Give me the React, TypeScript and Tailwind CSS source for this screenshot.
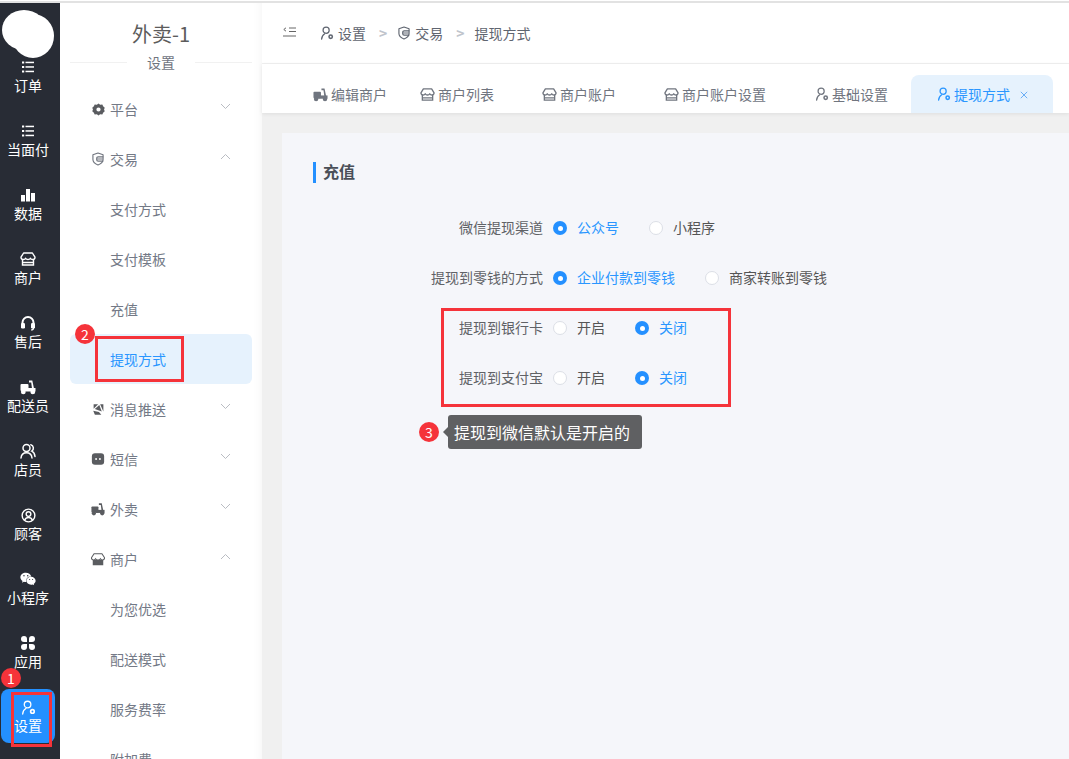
import { ReactNode } from 'react';
import { FaWeixin } from 'react-icons/fa';

type IconProps = { className?: string };

function UserGearIcon({ className }: IconProps) {
  return (
    <svg viewBox="0 0 16 16" className={className} fill="none" stroke="currentColor" strokeWidth="1.4">
      <circle cx="7" cy="4.800" r="3.500" />
      <path d="M1.800 15c.2-3 1.600-5 3.600-6.200" strokeLinecap="round" />
      <circle cx="12.200" cy="12.200" r="1.900" strokeWidth="1.800" />
    </svg>
  );
}

function StoreIcon({ className }: IconProps) {
  return (
    <svg viewBox="0 0 16 16" className={className} fill="none" stroke="currentColor" strokeWidth="1.4">
      <path d="M3.600 2h8.800l2.600 4.200c0 1.400-1 2.300-2.300 2.300-1 0-1.900-.5-2.300-1.300-.4.8-1.200 1.300-2.400 1.300s-2-.5-2.400-1.300C5.200 8 4.300 8.500 3.300 8.500 2 8.500 1 7.600 1 6.200z" strokeLinejoin="round" />
      <path d="M2.500 8.500V14h11V8.500M2.500 11.500h11" />
    </svg>
  );
}

function StoreFillIcon({ className }: IconProps) {
  return (
    <svg viewBox="0 0 16 16" className={className} fill="currentColor">
      <path d="M3.500 1.500h9L15.500 6c0 1.500-1 2.500-2.400 2.500-1 0-1.800-.5-2.300-1.300-.5.8-1.400 1.300-2.800 1.300S5.700 8 5.200 7.200C4.700 8 3.900 8.500 2.900 8.500 1.500 8.500.5 7.500.5 6z" fill="none" stroke="currentColor" strokeWidth="1.200" />
      <path d="M2 8.500c1.300.4 2.500.2 3.200-.5.900.8 4.700.8 5.600 0 .7.700 1.900.9 3.200.5V14.500H2z" />
    </svg>
  );
}

function ScooterIcon({ className }: IconProps) {
  return (
    <svg viewBox="0 0 16 16" className={className} fill="currentColor">
      <rect x="0.500" y="5" width="8" height="7" rx="1" />
      <rect x="5" y="9" width="10.500" height="3.500" />
      <path d="M9 1.500h3.300l1.700 8h-2L11.200 3.500H9z" />
      <circle cx="3.300" cy="12.900" r="2.400" />
      <circle cx="12.800" cy="12.900" r="2.400" />
    </svg>
  );
}

function ShieldIcon({ className }: IconProps) {
  return (
    <svg viewBox="0 0 16 16" className={className} fill="none" stroke="currentColor" strokeWidth="1.300">
      <path d="M8 1.200l5.800 2v5.300c0 3-2.500 5-5.800 6.300-3.300-1.300-5.800-3.300-5.800-6.300V3.200z" strokeLinejoin="round" />
      <path d="M14 5.500H8.200c-1 0-1.700.7-1.700 1.600v1.800c0 .9.700 1.600 1.700 1.600H14M6.500 8h7" />
    </svg>
  );
}

function HexGearIcon({ className }: IconProps) {
  return (
    <svg viewBox="0 0 16 16" className={className}>
      <path
        fillRule="evenodd"
        fill="currentColor"
        d="M8 .5l2 1.600 2.700-.4 1 2.400 2 1.700L14.800 8l.9 2.200-2 1.700-1 2.400-2.700-.4L8 15.500l-2-1.600-2.700.4-1-2.400-2-1.700L1.200 8 .3 5.800l2-1.700 1-2.400 2.700.4zM8 5.400a2.600 2.600 0 100 5.200 2.600 2.600 0 000-5.200z"
      />
    </svg>
  );
}

function PushIcon({ className }: IconProps) {
  return (
    <svg viewBox="0 0 16 16" className={className} fill="currentColor">
      <path d="M2 1.500h5.500L2 7z" />
      <path d="M10 1.500h4v9z" />
      <path d="M1.500 9.500L8.500 11l3 3.500H3.500z" />
      <path d="M3.500 7.500L9 2.500l3 8z" />
    </svg>
  );
}

function SmsIcon({ className }: IconProps) {
  return (
    <svg viewBox="0 0 16 16" className={className}>
      <rect x="1" y="1.500" width="14" height="13" rx="3.500" fill="currentColor" />
      <circle cx="5.800" cy="8" r="1.100" fill="#fff" />
      <circle cx="10.200" cy="8" r="1.100" fill="#fff" />
    </svg>
  );
}

function ListIcon({ className }: IconProps) {
  return (
    <svg viewBox="0 0 12 12" className={className} fill="currentColor">
      <rect x="0" y="0.500" width="2.200" height="2" />
      <rect x="0" y="5" width="2.200" height="2" />
      <rect x="0" y="9.500" width="2.200" height="2" />
      <rect x="3.500" y="0.700" width="8.500" height="1.500" />
      <rect x="3.500" y="5.200" width="8.500" height="1.500" />
      <rect x="3.500" y="9.700" width="8.500" height="1.500" />
    </svg>
  );
}

function BarsIcon({ className }: IconProps) {
  return (
    <svg viewBox="0 0 14 14" className={className} fill="currentColor">
      <rect x="0" y="7" width="4" height="6.500" />
      <rect x="5" y="1" width="4" height="12.500" />
      <rect x="10" y="5" width="4" height="8.500" />
    </svg>
  );
}

function HeadsetIcon({ className }: IconProps) {
  return (
    <svg viewBox="0 0 16 16" className={className} fill="none" stroke="currentColor">
      <path d="M2.500 9.500V7.500a5.500 5.500 0 0111 0v2" strokeWidth="2" />
      <rect x="1" y="8" width="4" height="5.500" rx="1.200" fill="currentColor" stroke="none" />
      <rect x="11" y="8" width="4" height="5.500" rx="1.200" fill="currentColor" stroke="none" />
      <path d="M13.500 13c0 1.300-1 2-2.500 2" strokeWidth="1.200" />
    </svg>
  );
}

function StaffIcon({ className }: IconProps) {
  return (
    <svg viewBox="0 0 16 16" className={className} fill="none" stroke="currentColor" strokeWidth="1.500">
      <circle cx="6.500" cy="5" r="3.500" />
      <path d="M1 15c.3-3 2.500-5.200 5.500-5.200S11.700 12 12 15" strokeLinecap="round" />
      <path d="M10.800 1.800a3.500 3.500 0 011 6.300c1.900.9 3 3 3.200 5.400" strokeLinecap="round" />
    </svg>
  );
}

function CustomerIcon({ className }: IconProps) {
  return (
    <svg viewBox="0 0 16 16" className={className} fill="none" stroke="currentColor" strokeWidth="1.500">
      <circle cx="8" cy="8" r="6.800" />
      <circle cx="8" cy="6.500" r="2.500" />
      <path d="M3.800 13c.8-1.800 2.300-2.800 4.200-2.800s3.400 1 4.200 2.800" />
    </svg>
  );
}

function CloverIcon({ className }: IconProps) {
  return (
    <svg viewBox="0 0 14 14" className={className} fill="currentColor">
      <path d="M0 3a3 3 0 016 0v3H3a3 3 0 01-3-3z" />
      <path d="M14 3a3 3 0 00-6 0v3h3a3 3 0 003-3z" />
      <path d="M0 11a3 3 0 006 0V8H3a3 3 0 00-3 3z" />
      <path d="M14 11a3 3 0 01-6 0V8h3a3 3 0 013 3z" />
    </svg>
  );
}

function CollapseIcon({ className }: IconProps) {
  return (
    <svg viewBox="0 0 13 10" className={className} fill="none" stroke="currentColor" strokeWidth="1">
      <path d="M3 .8L.8 2.500 3 4.200" />
      <path d="M6 1h7M6 4.500h7M0 9h13" />
    </svg>
  );
}

function CloseIcon({ className }: IconProps) {
  return (
    <svg viewBox="0 0 8 8" className={className} fill="none" stroke="currentColor" strokeWidth="1">
      <path d="M.8.800l6.400 6.400M7.200.800L.8 7.200" />
    </svg>
  );
}

function Chevron({ up }: { up?: boolean }) {
  return (
    <svg viewBox="0 0 11 7" className="w-[11px] h-[7px] text-[#b9bcc2] -mt-[5px]" fill="none" stroke="currentColor" strokeWidth="1">
      <path d={up ? 'M1 6l4.500-4.500L10 6' : 'M1 1l4.500 4.500L10 1'} />
    </svg>
  );
}

const railItems = [
  { label: '订单', icon: <ListIcon className="w-3 h-3" /> },
  { label: '当面付', icon: <ListIcon className="w-3 h-3" /> },
  { label: '数据', icon: <BarsIcon className="w-[14px] h-[14px]" /> },
  { label: '商户', icon: <StoreIcon className="w-4 h-4" /> },
  { label: '售后', icon: <HeadsetIcon className="w-4 h-4" /> },
  { label: '配送员', icon: <ScooterIcon className="w-4 h-4" /> },
  { label: '店员', icon: <StaffIcon className="w-4 h-4" /> },
  { label: '顾客', icon: <CustomerIcon className="w-[15px] h-[15px]" /> },
  { label: '小程序', icon: <FaWeixin className="w-4 h-4" /> },
  { label: '应用', icon: <CloverIcon className="w-[14px] h-[14px]" /> },
];

function RailItem({ label, icon, active }: { label: string; icon: ReactNode; active?: boolean }) {
  return (
    <div className="h-16 shrink-0 flex items-center pl-px">
      <div className={`w-[54px] h-[54px] rounded-lg flex flex-col items-center justify-center ${active ? 'bg-[#2490ff]' : ''}`}>
        <div className="h-5 flex items-center justify-center">{icon}</div>
        <span className="text-sm leading-5 -mt-[2px] whitespace-nowrap">{label}</span>
      </div>
    </div>
  );
}

function MenuGroup({ label, icon, open }: { label: string; icon: ReactNode; open?: boolean }) {
  return (
    <div className="h-[50px] flex items-center pl-[21px] pr-[21px] text-[#737986]">
      <span className="w-[14px] h-[14px] mr-[5px] text-[#5a5c60] flex items-center justify-center">{icon}</span>
      <span className="text-sm flex-1">{label}</span>
      <Chevron up={open} />
    </div>
  );
}

function MenuLink({ label, active }: { label: string; active?: boolean }) {
  return (
    <div className={`h-[50px] flex items-center pl-10 text-sm rounded-md ${active ? 'bg-[#e6f2fd] text-[#2a96ff]' : 'text-[#737986]'}`}>
      {label}
    </div>
  );
}

function Sidebar() {
  return (
    <aside className="w-[202px] shrink-0 h-full bg-white overflow-hidden shadow-[inset_-8px_0_8px_-6px_rgba(0,0,0,0.04)]">
      <div className="text-center text-xl leading-7 text-[#5c5c5c] pt-[17px]">外卖-1</div>
      <div className="mx-[10px] mt-[2px] h-6 flex items-center">
        <div className="flex-1 border-t border-[#f1f1f1]" />
        <span className="px-5 bg-white text-sm text-[#70757f]">设置</span>
        <div className="flex-1 border-t border-[#f1f1f1]" />
      </div>
      <div className="mx-[10px] mt-[10px]">
        <MenuGroup label="平台" icon={<HexGearIcon className="w-[13px] h-[13px]" />} />
        <MenuGroup label="交易" icon={<ShieldIcon className="w-[14px] h-[14px] text-[#70757f]" />} open />
        <MenuLink label="支付方式" />
        <MenuLink label="支付模板" />
        <MenuLink label="充值" />
        <MenuLink label="提现方式" active />
        <MenuGroup label="消息推送" icon={<PushIcon className="w-[13px] h-[13px]" />} />
        <MenuGroup label="短信" icon={<SmsIcon className="w-[14px] h-[14px]" />} />
        <MenuGroup label="外卖" icon={<ScooterIcon className="w-[14px] h-[14px]" />} />
        <MenuGroup label="商户" icon={<StoreFillIcon className="w-[15px] h-[15px]" />} open />
        <MenuLink label="为您优选" />
        <MenuLink label="配送模式" />
        <MenuLink label="服务费率" />
        <MenuLink label="附加费" />
      </div>
    </aside>
  );
}

function Breadcrumb() {
  return (
    <div className="h-[61px] border-b border-[#f0f0f0] flex items-center pl-[21px] text-sm text-[#5f6570]">
      <CollapseIcon className="w-[13px] h-[10px] text-[#666] -mt-[2px]" />
      <UserGearIcon className="w-[14px] h-[14px] ml-[24px] mr-[4px]" />
      <span>设置</span>
      <span className="ml-[13px] mr-[10px] text-[#c0c4cc] font-bold">&gt;</span>
      <ShieldIcon className="w-[14px] h-[14px] mr-[4px]" />
      <span>交易</span>
      <span className="ml-[13px] mr-[10px] text-[#c0c4cc] font-bold">&gt;</span>
      <span>提现方式</span>
    </div>
  );
}

const tabs = [
  { label: '编辑商户', icon: <ScooterIcon className="w-[15px] h-[15px]" />, cls: 'ml-[51px]' },
  { label: '商户列表', icon: <StoreIcon className="w-[15px] h-[15px]" />, cls: 'ml-[33px]' },
  { label: '商户账户', icon: <StoreIcon className="w-[15px] h-[15px]" />, cls: 'ml-[48px]' },
  { label: '商户账户设置', icon: <StoreIcon className="w-[15px] h-[15px]" />, cls: 'ml-[48px]' },
  { label: '基础设置', icon: <UserGearIcon className="w-[14px] h-[14px]" />, cls: 'ml-[49px]' },
];

function TabBar() {
  return (
    <div className="relative z-10 h-[49px] bg-white flex items-end shadow-[0_1px_4px_rgba(0,0,0,0.08)]">
      {tabs.map((t) => (
        <div key={t.label} className={`h-[38px] flex items-center gap-[3px] text-sm text-[#70757f] whitespace-nowrap ${t.cls}`}>
          {t.icon}
          <span>{t.label}</span>
        </div>
      ))}
      <div className="ml-[23px] w-[142px] h-[38px] bg-[#e6f2fd] rounded-t-lg flex items-center pl-[26px] text-sm text-[#2a96ff] whitespace-nowrap">
        <UserGearIcon className="w-[14px] h-[14px] mr-[3px]" />
        <span>提现方式</span>
        <CloseIcon className="w-2 h-2 ml-[10px] mt-[2px] text-[#6aaef5]" />
      </div>
    </div>
  );
}

function Radio({ label, checked, cls }: { label: string; checked?: boolean; cls?: string }) {
  return (
    <div className={`flex items-center ${cls ?? ''}`}>
      <span className={`w-[14px] h-[14px] rounded-full flex items-center justify-center mr-[10px] ${checked ? 'bg-[#2490ff]' : 'bg-white border border-[#dcdfe6]'}`}>
        {checked && <span className="w-[5px] h-[5px] rounded-full bg-white" />}
      </span>
      <span className={`pb-[2px] ${checked ? 'text-[#2a96ff]' : 'text-[#555]'}`}>{label}</span>
    </div>
  );
}

function FormRow({ label, children }: { label: string; children: ReactNode }) {
  return (
    <div className="h-[50px] flex items-center text-sm">
      <div className="w-[112px] mr-[10px] pb-[2px] text-right text-[#606266] whitespace-nowrap">{label}</div>
      {children}
    </div>
  );
}

function Panel() {
  return (
    <div className="flex-1 bg-[#f0f0f0] pl-5 pt-5 overflow-hidden">
      <div className="h-full bg-[#f5f6fa] pt-[29px]">
        <div className="ml-[31px] h-[21px] border-l-[3px] border-[#2490ff] pl-[7px] flex items-center text-base font-semibold text-[#4a4f58]">
          <span className="-mt-[4px]">充值</span>
        </div>
        <div className="pl-[149px] pt-5">
          <FormRow label="微信提现渠道">
            <Radio label="公众号" checked />
            <Radio label="小程序" cls="ml-[30px]" />
          </FormRow>
          <FormRow label="提现到零钱的方式">
            <Radio label="企业付款到零钱" checked />
            <Radio label="商家转账到零钱" cls="ml-[30px]" />
          </FormRow>
          <FormRow label="提现到银行卡">
            <Radio label="开启" />
            <Radio label="关闭" checked cls="ml-[30px]" />
          </FormRow>
          <FormRow label="提现到支付宝">
            <Radio label="开启" />
            <Radio label="关闭" checked cls="ml-[30px]" />
          </FormRow>
        </div>
      </div>
    </div>
  );
}

function Badge({ n, cls }: { n: number; cls: string }) {
  return (
    <div className={`absolute z-20 w-5 h-5 rounded-full bg-[#f5333a] text-white text-sm leading-5 text-center ${cls}`}>{n}</div>
  );
}

export default function App() {
  return (
    <div
      className="relative w-[1069px] h-[759px] overflow-hidden bg-white flex flex-col"
      style={{ fontFamily: '"Noto Sans CJK SC", "Liberation Sans", sans-serif' }}
    >
      <div className="h-[3px] shrink-0 border-b-2 border-[#e2e2e2]" />
      <div className="flex-1 min-h-0 flex">
        <nav className="w-[60px] shrink-0 bg-[#282c35] text-white pt-[41px] overflow-hidden">
          {railItems.map((r) => (
            <RailItem key={r.label} label={r.label} icon={r.icon} />
          ))}
          <RailItem label="设置" icon={<UserGearIcon className="w-[15px] h-[15px]" />} active />
        </nav>
        <Sidebar />
        <main className="flex-1 min-w-0 flex flex-col">
          <Breadcrumb />
          <TabBar />
          <Panel />
        </main>
      </div>

      {/* logo blob covered over in the screenshot */}
      <svg viewBox="0 0 54 52" className="absolute left-0 top-[6px] w-[54px] h-[52px] z-20" fill="#fff">
        <ellipse cx="24" cy="24" rx="22" ry="20" />
        <ellipse cx="33" cy="30" rx="21" ry="22" />
      </svg>

      {/* annotations */}
      <Badge n={1} cls="left-px top-[668px]" />
      <div className="absolute z-20 left-[11px] top-[692px] w-[41px] h-[55px] border-[3px] border-[#f5333a]" />
      <Badge n={2} cls="left-[75px] top-[324px]" />
      <div className="absolute z-20 left-[95px] top-[336px] w-[89px] h-[46px] border-[3px] border-[#f5333a]" />
      <div className="absolute z-20 left-[441px] top-[308px] w-[290px] h-[99px] border-[3px] border-[#f5333a]" />
      <Badge n={3} cls="left-[419px] top-[422px]" />
      <div className="absolute z-20 left-[448px] top-[415px] w-[194px] h-[34px] rounded-[3px] bg-[#5f6062] text-white text-base leading-[34px] pl-[6px] whitespace-nowrap">
        <span className="absolute -left-[5px] top-[12px] w-0 h-0 border-y-[5px] border-y-transparent border-r-[5px] border-r-[#5f6062]" />
        提现到微信默认是开启的
      </div>
    </div>
  );
}
